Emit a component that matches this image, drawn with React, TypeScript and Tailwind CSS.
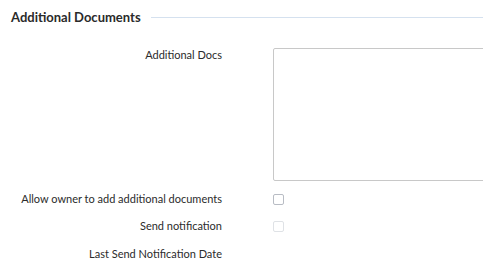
import React from "react";

export default function App() {
  return (
    <div className="w-[483px] h-[266px] overflow-hidden bg-white text-[#2b2b2b]" style={{ fontFamily: 'Lato, sans-serif' }}>
      <div className="flex items-center pl-[11px] pt-[8px] h-[19px] box-content">
        <h2 className="text-[13px] font-bold text-[#2a2a2a] leading-[19px] whitespace-nowrap shrink-0">Additional Documents</h2>
        <div className="ml-[10px] flex-1 h-px bg-[#d5e1ef]" />
      </div>
      <div className="mt-[21px] flex">
        <div className="w-[222px] shrink-0 pt-0 text-right text-[11px] leading-[13px]">Additional Docs</div>
        <div className="ml-[51px] w-[220px] h-[133px] border border-[#c8c8c8] rounded-[2px] shrink-0" />
      </div>
      <div className="mt-[10px] flex items-center h-[16px]">
        <div className="w-[222px] shrink-0 text-right text-[11px] leading-[14px] whitespace-nowrap">Allow owner to add additional documents</div>
        <div className="ml-[51px] w-[11px] h-[11px] border border-[#b8bcc4] rounded-[2px] shrink-0" />
      </div>
      <div className="mt-[11px] flex items-center h-[16px]">
        <div className="w-[222px] shrink-0 text-right text-[11px] leading-[14px]">Send notification</div>
        <div className="ml-[51px] w-[11px] h-[11px] border border-[#dfe2e6] rounded-[2px] shrink-0" />
      </div>
      <div className="mt-[12px] flex items-center h-[16px]">
        <div className="w-[222px] shrink-0 text-right text-[11px] leading-[14px]">Last Send Notification Date</div>
      </div>
    </div>
  );
}
